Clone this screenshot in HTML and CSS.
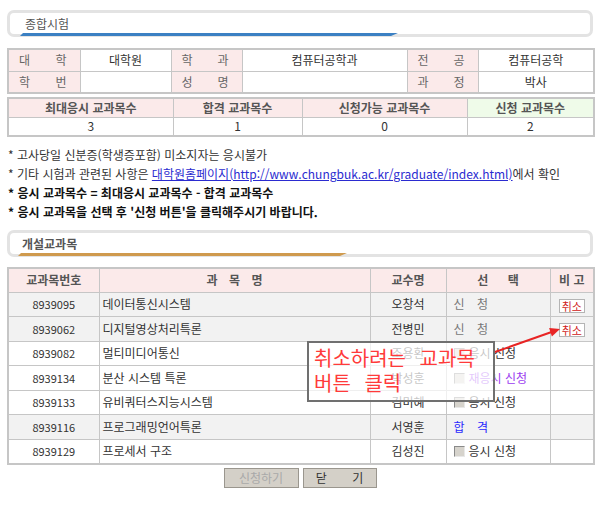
FILE: index.html
```html
<!DOCTYPE html>
<html lang="ko">
<head>
<meta charset="utf-8">
<title>종합시험</title>
<link rel="stylesheet" href="styles.css">
</head>
<body>
<div class="page">
  <div class="sec-title sec-blue">
    <div class="sec-text">종합시험</div>
    <div class="sec-bar"></div>
  </div>

  <table class="grid info">
    <colgroup>
      <col class="w72"><col class="w91"><col class="w71"><col class="w165"><col class="w71"><col class="w116">
    </colgroup>
    <tr>
      <th class="lbl"><div class="sp"><span>대</span><span>학</span></div></th>
      <td>대학원</td>
      <th class="lbl"><div class="sp"><span>학</span><span>과</span></div></th>
      <td>컴퓨터공학과</td>
      <th class="lbl"><div class="sp"><span>전</span><span>공</span></div></th>
      <td>컴퓨터공학</td>
    </tr>
    <tr>
      <th class="lbl"><div class="sp"><span>학</span><span>번</span></div></th>
      <td></td>
      <th class="lbl"><div class="sp"><span>성</span><span>명</span></div></th>
      <td></td>
      <th class="lbl"><div class="sp"><span>과</span><span>정</span></div></th>
      <td>박사</td>
    </tr>
  </table>

  <table class="grid counts">
    <colgroup>
      <col class="w165"><col class="w129"><col class="w165"><col class="w127">
    </colgroup>
    <tr>
      <th class="hd">최대응시 교과목수</th>
      <th class="hd">합격 교과목수</th>
      <th class="hd">신청가능 교과목수</th>
      <th class="hd green">신청 교과목수</th>
    </tr>
    <tr>
      <td>3</td><td>1</td><td>0</td><td>2</td>
    </tr>
  </table>

  <ul class="notes">
    <li>* 고사당일 신분증(학생증포함) 미소지자는 응시불가</li>
    <li>* 기타 시험과 관련된 사항은 <a href="#">대학원홈페이지(http://www.chungbuk.ac.kr/graduate/index.html)</a>에서 확인</li>
    <li class="strong">* 응시 교과목수 = 최대응시 교과목수 - 합격 교과목수</li>
    <li class="strong">* 응시 교과목을 선택 후 '신청 버튼'을 클릭해주시기 바랍니다.</li>
  </ul>

  <div class="sec-title sec-orange">
    <div class="sec-text">개설교과목</div>
    <div class="sec-bar"></div>
  </div>

  <div class="course-wrap">
    <table class="grid courses">
      <colgroup>
        <col class="w91"><col class="w271"><col class="w76"><col class="w104"><col class="w44">
      </colgroup>
      <tr class="head">
        <th class="hd">교과목번호</th>
        <th class="hd wide">과 목 명</th>
        <th class="hd">교수명</th>
        <th class="hd wide2">선 택</th>
        <th class="hd">비 고</th>
      </tr>
      <tr class="shade">
        <td class="code">8939095</td><td class="name">데이터통신시스템</td><td>오창석</td>
        <td class="sel"><span class="applied">신 청</span></td>
        <td><span class="cancel">취소</span></td>
      </tr>
      <tr class="shade">
        <td class="code">8939062</td><td class="name">디지털영상처리특론</td><td>전병민</td>
        <td class="sel"><span class="applied">신 청</span></td>
        <td><span class="cancel">취소</span></td>
      </tr>
      <tr>
        <td class="code">8939082</td><td class="name">멀티미디어통신</td><td>조용환</td>
        <td class="sel"><span class="chk"></span>응시 신청</td>
        <td></td>
      </tr>
      <tr>
        <td class="code">8939134</td><td class="name">분산 시스템 특론</td><td>박성훈</td>
        <td class="sel"><span class="chk"></span><span class="retry">재응시 신청</span></td>
        <td></td>
      </tr>
      <tr>
        <td class="code">8939133</td><td class="name">유비쿼터스지능시스템</td><td>김미혜</td>
        <td class="sel"><span class="chk"></span>응시 신청</td>
        <td></td>
      </tr>
      <tr class="shade">
        <td class="code">8939116</td><td class="name">프로그래밍언어특론</td><td>서영훈</td>
        <td class="sel"><span class="passed">합 격</span></td>
        <td></td>
      </tr>
      <tr>
        <td class="code">8939129</td><td class="name">프로세서 구조</td><td>김성진</td>
        <td class="sel"><span class="chk"></span>응시 신청</td>
        <td></td>
      </tr>
    </table>

    <div class="callout">취소하려는 교과목<br>버튼 클릭</div>
    <svg class="arrow" width="90" height="40" viewBox="0 0 90 40">
      <line x1="8" y1="30" x2="66" y2="9.5" stroke="#e82424" stroke-width="2"/>
      <polygon points="73,7 64.9,14.6 62.1,6.1" fill="#e82424"/>
    </svg>
  </div>

  <div class="btns">
    <button class="btn disabled" type="button">신청하기</button>
    <button class="btn close" type="button">닫 기</button>
  </div>
</div>
</body>
</html>
```

FILE: styles.css
```css
* { box-sizing: border-box; }

body {
  margin: 0;
  background: #fff;
  font-family: "Noto Sans CJK KR", "Noto Sans", sans-serif;
  font-size: 12px;
  color: #333;
}

.page {
  width: 600px;
  padding: 10px 7px 0 7px;
}

/* section titles */
.sec-title {
  height: 27px;
  border: 3px solid #e3e3e3;
  border-radius: 7px;
  padding-top: 3px;
}
.sec-text {
  line-height: 16px;
  color: #555;
  padding-left: 15px;
}
.sec-bar {
  height: 3px;
  margin-top: 1px;
  margin-left: 10px;
  width: 378px;
  clip-path: polygon(3px 0, 100% 0, calc(100% - 7px) 100%, 0 100%);
}
.sec-blue .sec-bar { background: #3b80c3; }
.sec-orange { margin-top: 9px; }
.sec-orange .sec-text { padding-left: 12px; font-weight: 700; color: #555; }
.sec-orange .sec-bar { background: #cf9a4e; margin-left: 8px; width: 329px; }

/* tables */
table.grid {
  width: 586px;
  border-collapse: collapse;
  table-layout: fixed;
  border: 2px solid #c6c6c6;
}
.grid th, .grid td {
  border: 1px solid #c6c6c6;
  padding: 0;
  text-align: center;
  font-weight: normal;
  line-height: 16px;
  white-space: nowrap;
}

.w44 { width: 44px; }
.w71 { width: 71px; }
.w72 { width: 72px; }
.w76 { width: 76px; }
.w91 { width: 91px; }
.w104 { width: 104px; }
.w116 { width: 116px; }
.w127 { width: 127px; }
.w129 { width: 129px; }
.w165 { width: 165px; }
.w271 { width: 271px; }

.info { margin-top: 11px; }
.info tr { height: 22px; }
.info td { color: #333; }
.lbl { background: #fbeaea; color: #666; }
.sp {
  display: flex;
  justify-content: space-between;
  padding: 0 13px 0 10px;
}

.counts { margin-top: 3px; }
.counts tr { height: 19px; }
.hd { background: #fbeaea; color: #555; font-weight: 700 !important; }
.hd.green { background: #effbe9; }

/* notes */
.notes {
  list-style: none;
  margin: 8px 0 0 0;
  padding: 0 0 0 1px;
}
.notes li {
  height: 19px;
  line-height: 19px;
  color: #333;
  white-space: nowrap;
}
.notes li.strong { font-weight: 700; color: #111; }
.notes a { color: #2b2bd0; text-decoration: underline; }

/* courses */
.course-wrap {
  position: relative;
  margin-top: 10px;
}
.courses tr { height: 24.5px; }
.courses tr.head { height: 24px; }
.courses .wide { word-spacing: 8px; }
.courses .wide2 { word-spacing: 16px; }
.courses tr.shade td { background: #f2f2f2; }
.courses td { color: #333; }
.courses td.code { font-size: 11px; }
.courses td.name { text-align: left; padding-left: 3px; }
.courses td.sel { text-align: left; padding-left: 7px; }
.applied { color: #777; word-spacing: 9px; }
.passed { color: #2a2aff; word-spacing: 9px; }
.retry { color: #9b3cf0; }
.chk {
  display: inline-block;
  width: 11px;
  height: 11px;
  vertical-align: -1px;
  margin-right: 4px;
  background: #d6d3cc;
  border-top: 1px solid #8a8a8a;
  border-left: 1px solid #8a8a8a;
  border-right: 1px solid #e8e8e8;
  border-bottom: 1px solid #e8e8e8;
}
.cancel {
  display: inline-block;
  width: 26px;
  height: 14px;
  line-height: 12px;
  font-size: 11px;
  color: #d02020;
  background: #fff;
  border: 1px solid #b4b4b4;
  vertical-align: middle;
}

.callout {
  position: absolute;
  left: 300px;
  top: 74px;
  width: 188px;
  height: 61px;
  padding: 2px 0 0 5px;
  border: 2px solid #707070;
  background: rgba(255, 255, 255, 0.72);
  color: #ff3a3a;
  font-size: 20px;
  line-height: 25px;
  word-spacing: 8px;
  white-space: nowrap;
}
.arrow {
  position: absolute;
  left: 480px;
  top: 55px;
}

/* buttons */
.btns {
  display: flex;
  justify-content: center;
  gap: 4px;
  margin-top: 3px;
}
.btn {
  width: 75px;
  height: 20px;
  padding: 0;
  font-family: "Noto Sans CJK KR", "Noto Sans", sans-serif;
  font-size: 12px;
  font-weight: 400;
  line-height: 16px;
  background: #d4d0c8;
  border: 1px solid #9a968e;
  border-radius: 0;
  color: #333;
}
.btn.disabled { color: #a9a9a9; }
.btn.close { width: 74px; word-spacing: 22px; }
```
